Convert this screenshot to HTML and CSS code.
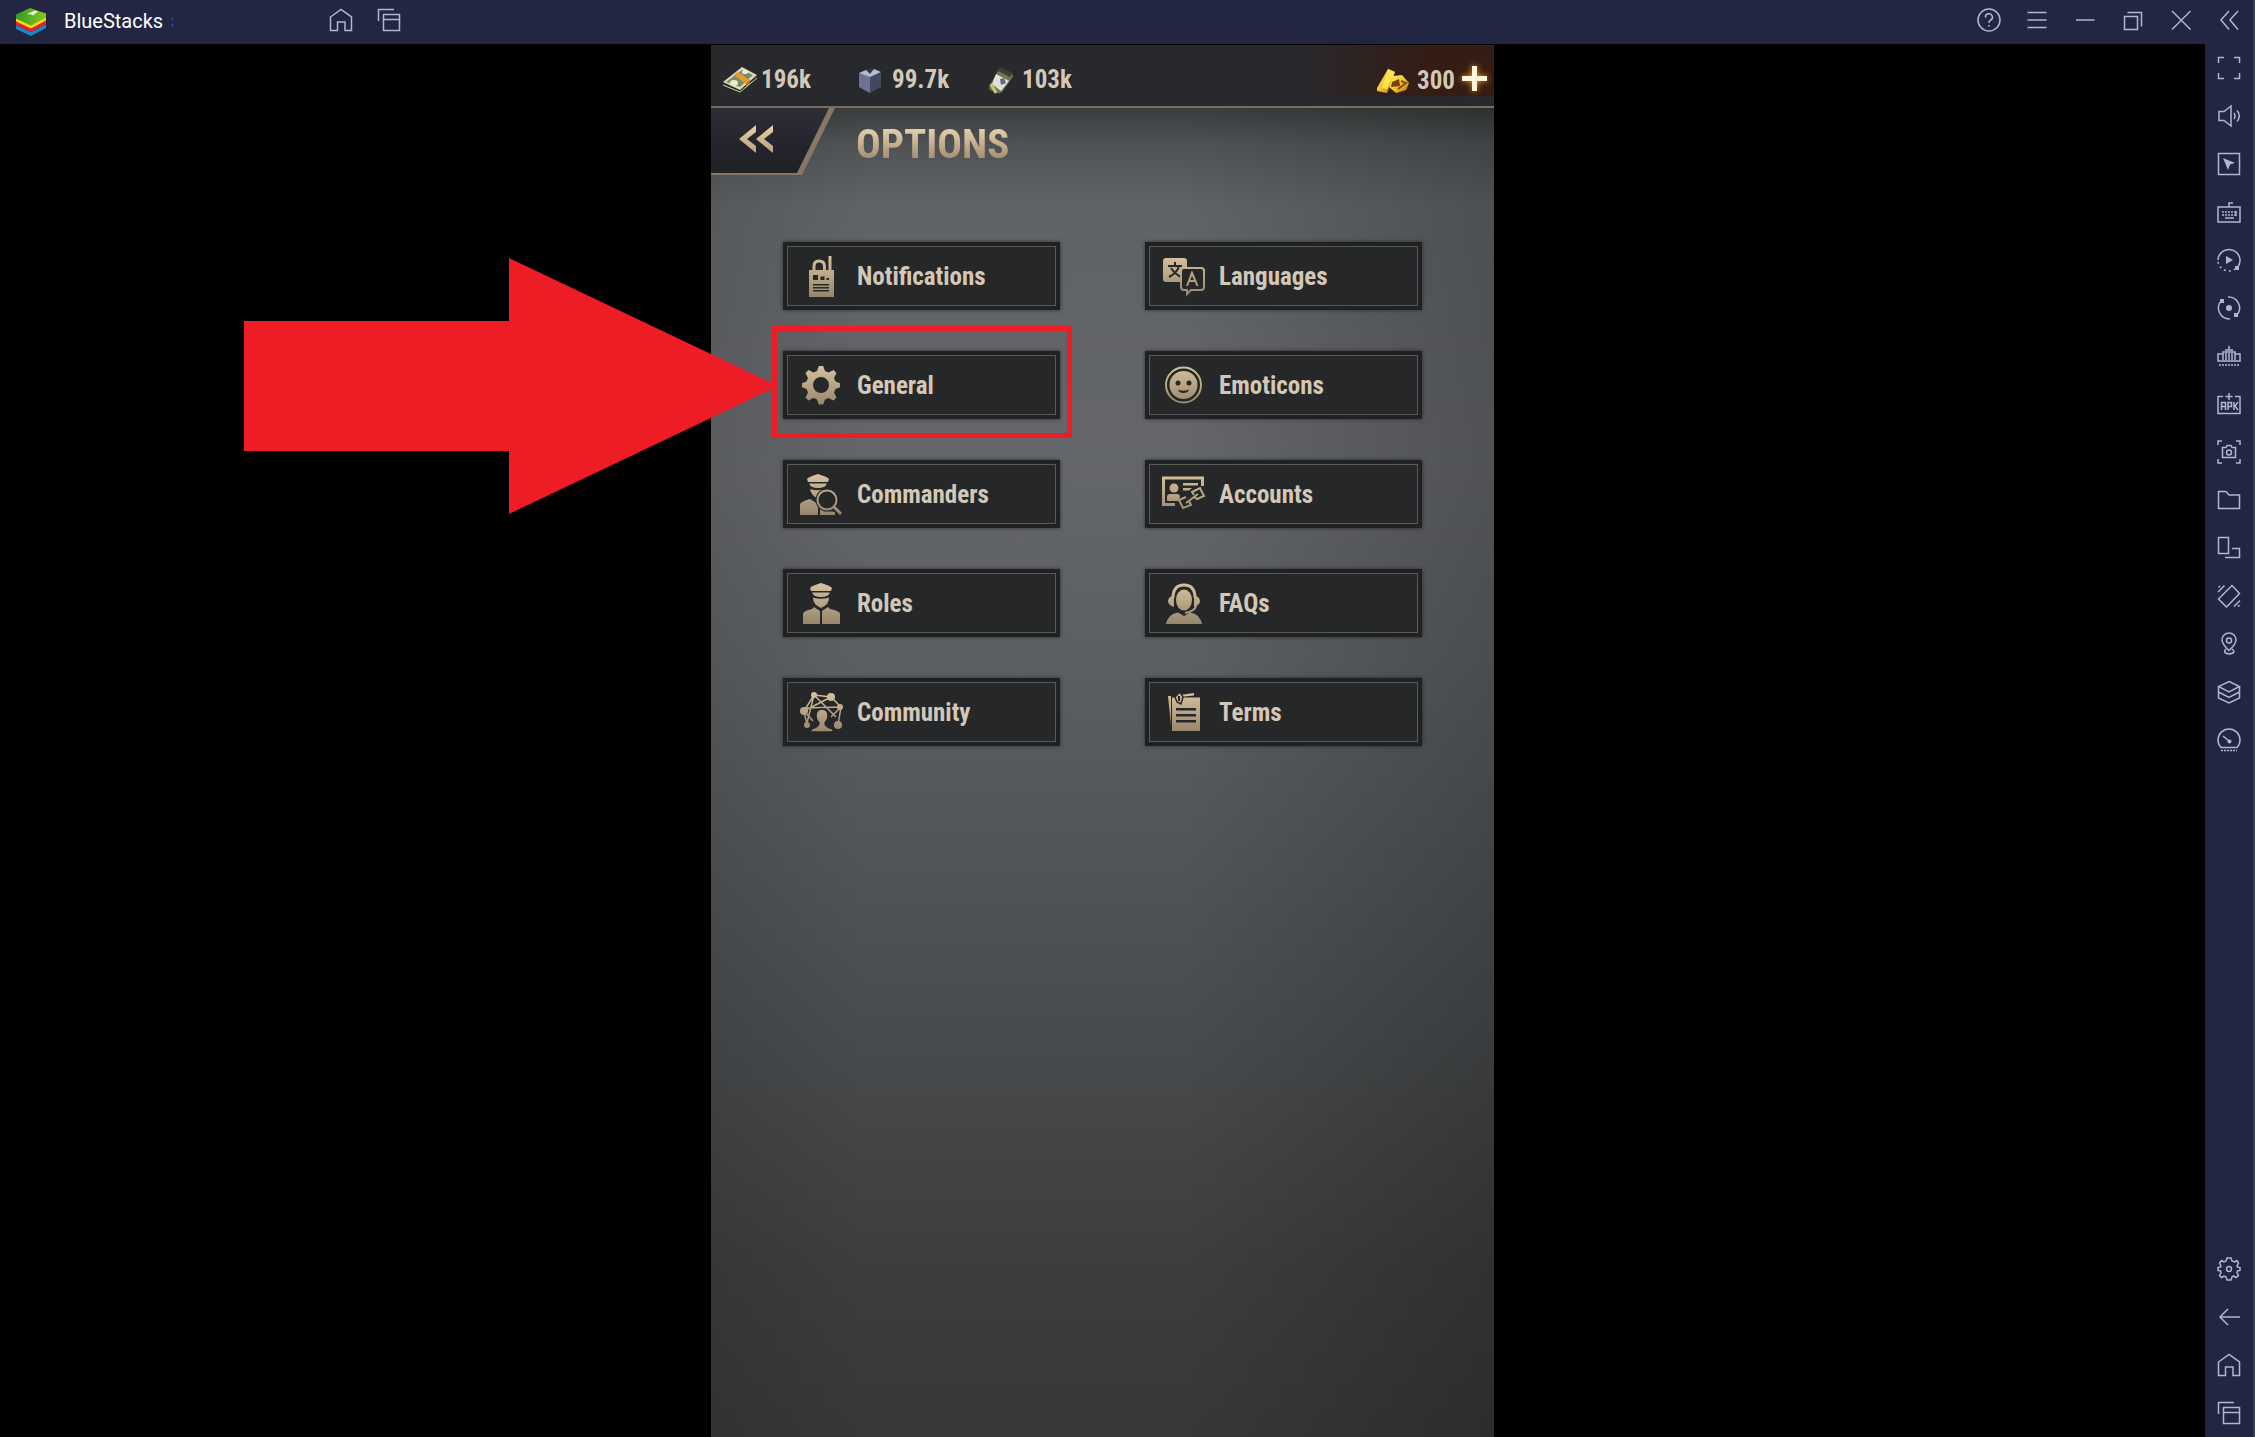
FILE: index.html
```html
<!DOCTYPE html>
<html lang="en">
<head>
<meta charset="utf-8">
<title>BlueStacks</title>
<link rel="stylesheet" href="styles.css">
</head>
<body>
<svg class="defs" width="0" height="0" aria-hidden="true">
  <defs>
    <linearGradient id="gold" gradientUnits="userSpaceOnUse" x1="0" y1="2" x2="0" y2="44">
      <stop offset="0" stop-color="#d8c49f"/><stop offset="1" stop-color="#96856b"/>
    </linearGradient>
    <linearGradient id="bar" x1="0" y1="0" x2="1" y2="1">
      <stop offset="0" stop-color="#fff27a"/><stop offset=".5" stop-color="#f2c62b"/><stop offset="1" stop-color="#b9780f"/>
    </linearGradient>
    <linearGradient id="leaf" x1="0" y1="0" x2="1" y2="0">
      <stop offset="0" stop-color="#2f9a2b"/><stop offset="1" stop-color="#8cc41c"/>
    </linearGradient>
    <symbol id="home" viewBox="0 0 24 24"><path d="M1.5 9 12 1.5 22.500 9V22.500H16V14H8.500V22.500H1.500Z"/></symbol>
    <symbol id="windows" viewBox="0 0 24 24"><path d="M6.500 6.500H22.500V22.500H6.500ZM6.500 11.500H22.500M1.500 13V1.500H17"/></symbol>
  </defs>
</svg>
<div class="app">
  <header class="titlebar">
    <svg class="logo" viewBox="0 0 32 30" aria-hidden="true">
      <path d="M1 18 16 25 31 17V21L16 29 1 22Z" fill="#1b86c4"/>
      <path d="M1 14 16 21 31 13V17L16 25 1 18Z" fill="#e3202b"/>
      <path d="M1 11 16 18 31 10V13.500L16 21.500 1 14.500Z" fill="#fbd316"/>
      <path d="M1 7.500 15 1 31 6.500V10.500L16 18.500 1 11.500Z" fill="url(#leaf)"/>
      <path d="M12 7 20 3.500 23 4.500 18 8.500 16 7.500Z" fill="#e8f5dc"/>
    </svg>
    <h1 class="app-name">BlueStacks</h1>
    <span class="tick" aria-hidden="true"></span>
    <nav class="tabs">
      <button class="tool" aria-label="Home"><svg><use href="#home"/></svg></button>
      <button class="tool" aria-label="Instances"><svg><use href="#windows"/></svg></button>
    </nav>
    <div class="window-tools">
      <button class="tool" aria-label="Help"><svg viewBox="0 0 24 24"><circle cx="12" cy="12" r="11"/><path d="M8.500 9.500A3.500 3.300 0 1 1 13.500 12Q12 12.800 12 15M12 17V18.500"/></svg></button>
      <button class="tool" aria-label="Menu"><svg viewBox="0 0 24 24"><path d="M2.500 4.500H21.500M2.500 12H21.500M2.500 19.500H21.500"/></svg></button>
      <button class="tool" aria-label="Minimize"><svg viewBox="0 0 24 24"><path d="M3 12H21.500"/></svg></button>
      <button class="tool" aria-label="Restore"><svg viewBox="0 0 24 24"><path d="M3.500 8.500H16.500V21.500H3.500ZM6.500 4.500H20.500V18.500"/></svg></button>
      <button class="tool" aria-label="Close"><svg viewBox="0 0 24 24"><path d="M3 3 21.500 21.500M21.500 3 3 21.500"/></svg></button>
      <button class="tool" aria-label="Collapse sidebar"><svg viewBox="0 0 24 24"><path d="M12 3 4 12 12 21.500M21 3 13 12 21 21.500"/></svg></button>
    </div>
  </header>
  <div class="workspace">
    <main class="stage">
      <section class="game">
        <div class="resources">
          <div class="resource cash">
            <svg class="res-icon" viewBox="0 0 35 29" aria-hidden="true"><path d="M0 17 19 1 34 10V15L18 28 0 21Z" fill="#2c3020"/><path d="M0 16 19 1 34 9 17 24Z" fill="#d8ddb8"/><path d="M3 16 19 4 30 9 17 21Z" fill="#7d8b64"/><ellipse cx="11" cy="17" rx="4" ry="3" fill="#e9edd2"/><ellipse cx="22" cy="6" rx="3" ry="2" fill="#e9edd2"/><path d="M11 9 15 6 27 14 23 18Z" fill="#e59a2c"/><path d="M23 18 27 14V18L23 22Z" fill="#a8671a"/><path d="M0 19 17 26 34 12" fill="none" stroke="#c7ccab"/></svg>
            <span>196k</span>
          </div>
          <div class="resource steel">
            <svg class="res-icon" viewBox="0 0 24 27" aria-hidden="true"><path d="M1 6 13 1 23 5V20L12 26 1 20Z" fill="#34364a"/><path d="M1 6 12 10V26L1 20Z" fill="#6c7390"/><path d="M12 10 23 5V20L12 26Z" fill="#45475e"/><path d="M1 6 8 3 12 7 16 2 23 5 12 10Z" fill="#b0bed4"/></svg>
            <span>99.7k</span>
          </div>
          <div class="resource food">
            <svg class="res-icon" viewBox="0 0 26 28" aria-hidden="true"><path d="M11 3 24 8Q26 10 24 12L14 26Q11 29 2 24 0 22 2 19Z" fill="#727550"/><path d="M8 8 21 15 13 25 4 18Z" fill="#dfe0da"/><path d="M12 13 16 12 18 17 13 19Z" fill="#656a75"/><path d="M12 1 25 7 22 11 10 5Z" fill="#3d4030"/><path d="M3 18 8 27" stroke="#c8c87c" stroke-width="3"/></svg>
            <span>103k</span>
          </div>
          <div class="resource premium">
            <svg class="res-icon" viewBox="0 0 34 26" aria-hidden="true"><path d="M1 20 12 1 19 4 11 25 1 23Z" fill="url(#bar)"/><path d="M12 1 19 4 11 21 6 20Z" fill="#ffe34d"/><path d="M17 8 26 7 33 15 30 22 20 25 13 19Z" fill="url(#bar)"/><path d="M16 14 23 11 24 18 15 19Z" fill="#7b4309"/><path d="M25 13 30 15 22 21" fill="none" stroke="#8a4d0a" stroke-width="2"/></svg>
            <span>300</span>
            <button class="plus" aria-label="Buy gold"></button>
          </div>
        </div>
        <header class="screen-head">
          <button class="back" aria-label="Back">
            <svg viewBox="0 0 125 68" aria-hidden="true"><defs><linearGradient id="dark" x1="0" y1="0" x2="0" y2="1"><stop offset="0" stop-color="#2d2e38"/><stop offset=".6" stop-color="#23232b"/><stop offset="1" stop-color="#212223"/></linearGradient><linearGradient id="chev" x1="0" y1="0" x2="0" y2="1"><stop offset="0" stop-color="#e4d0a7"/><stop offset="1" stop-color="#b8a17b"/></linearGradient></defs><path d="M0 0H119L88 67H0Z" fill="url(#dark)"/><path d="M118 0H124L91 67H85Z" fill="#887766"/><path d="M0 66H88" stroke="#887766" stroke-width="2"/><path d="M45 17V24L36 31 45 38V45L28 31ZM62 17V24L53 31 62 38V45L45 31Z" fill="url(#chev)"/></svg>
          </button>
          <h2>OPTIONS</h2>
        </header>
        <div class="options">
          <button class="option">
            <svg viewBox="0 0 46 46" aria-hidden="true"><path class="f" fill-rule="evenodd" d="M11 17H36V44H11ZM15 22V27H20V22ZM22.500 23.500V27H26.500V23.500ZM28.500 25V27H31V25ZM15 31V32.500H31V31ZM15 34V35.500H31V34ZM15 37V38.500H31V37Z"/><path class="s w3" d="M16 17V13Q16 8 21 8T26.500 13V17"/><path class="s w3" d="M32 3V17"/></svg>
            <span>Notifications</span></button>
          <button class="option">
            <svg viewBox="0 0 46 46" aria-hidden="true"><rect class="f" x="3" y="5" width="24" height="24" rx="3"/><path class="d" d="M15 9V12M8 13H22M19 13Q17 20 9 24M11 15Q15 21 21 24"/><path class="s w2 k" d="M24 15H41Q44 15 44 18V34Q44 37 41 37H31L27 41V37H24Q21 37 21 34V18Q21 15 24 15Z"/><path class="s w2" d="M27 33 32 20 37.500 33M29 28H36"/></svg>
            <span>Languages</span></button>
          <div class="marked">
            <button class="option">
              <svg viewBox="0 0 46 46" aria-hidden="true"><path class="f" fill-rule="evenodd" d="M20.800 4H25.200L27 9 30.500 10.500 35.500 8 38.500 11 36 16 37.500 19.500 42 21.200V25.200L37.500 27 36 30.500 38.500 35.500 35.500 38.500 30.500 36 27 37.500 25.200 42.500H20.800L19 37.500 15.500 36 10.500 38.500 7.500 35.500 10 30.500 8.500 27 4 25.200V21.200L8.500 19.500 10 16 7.500 11 10.500 8 15.500 10.500 19 9ZM23 15A8 8 0 1 0 23 31 8 8 0 1 0 23 15Z"/></svg>
              <span>General</span></button>
            <span class="frame"></span>
            <svg class="arrow" viewBox="0 0 534 256" aria-hidden="true"><path d="M0 63H265V0L534 128 265 256V193H0Z"/></svg>
          </div>
          <button class="option">
            <svg viewBox="0 0 46 46" aria-hidden="true"><circle class="s w2" cx="23.500" cy="23" r="17.500"/><path class="f" fill-rule="evenodd" d="M23.500 9A14 14 0 1 0 23.500 37 14 14 0 1 0 23.500 9ZM18 18.500A2.500 2.500 0 1 1 18 23.500 2.500 2.500 0 1 1 18 18.500ZM29 18.500A2.500 2.500 0 1 1 29 23.500 2.500 2.500 0 1 1 29 18.500ZM18 27.500Q23.500 30 29 27.500 28 31 23.500 31T18 27.500Z"/></svg>
            <span>Emoticons</span></button>
          <button class="option">
            <svg viewBox="0 0 46 46" aria-hidden="true"><path class="f" d="M9 8Q10 6 20 3 30 6 31 8L30 11H10ZM11 12.500H29L27 15.500Q20 18.500 13 15.500ZM12 18Q20 20.500 27 18L20 28Q13 24 12 18ZM2 44V33Q4 30 12 28L20 33V44ZM22 44V36L30 40 37 41V44Z"/><circle cx="29" cy="29" r="11.500" fill="#262728"/><circle class="s w2" cx="29" cy="29" r="9.500"/><path class="s w3" d="M36 36 43 43"/></svg>
            <span>Commanders</span></button>
          <button class="option">
            <svg viewBox="0 0 46 46" aria-hidden="true"><path class="s w3" d="M15 33.500H3.500V7H42.500V15"/><circle class="f" cx="14" cy="17" r="4.500"/><path class="f" d="M7 30V26Q7 23 10 23H17Q20 23 20 26L18 30ZM23 12H38V14.500H23ZM23 17H32L29 19.500H23Z"/><path class="s w2" d="M26 26 19 29 23 37 31 34 29 30M34 24 32 21 40 17 44 25 37 28 34 26M26 32 38 23"/></svg>
            <span>Accounts</span></button>
          <button class="option">
            <svg viewBox="0 0 46 46" aria-hidden="true"><path class="f" d="M12 8Q13 6 23 3 33 6 34 8L33 11H13ZM14 12.500H32L30 15.500Q23 18.500 16 15.500ZM15 17.500Q23 20 31 17.500 31 25 23 28 15 25 15 17.500ZM5 44V34Q5 31 14 29L16 27 22 31V44ZM24 44V31L30 27 32 29Q42 31 42 34V44Z"/></svg>
            <span>Roles</span></button>
          <button class="option">
            <svg viewBox="0 0 46 46" aria-hidden="true"><ellipse class="f" cx="24" cy="20" rx="8" ry="10.500"/><path class="s w3" d="M13 18Q13 5 24 5T35 18"/><path class="s w2" d="M36 26Q35 31 25 33"/><path class="f" d="M14 15Q8 17 8 21T14 27ZM34 15Q40 17 40 21T34 27ZM6 44Q8 34 18 32.500L24 36 30 32.500Q40 34 42 44Z"/></svg>
            <span>FAQs</span></button>
          <button class="option">
            <svg viewBox="0 0 46 46" aria-hidden="true"><path class="s w1" d="M6 22 16 6 33 8 43 18 40 36M6 22 9 36M6 22 33 8M6 19 43 18M16 6 38 28M16 6 9 34M6 22 15 32M43 18 33 28"/><circle class="f" cx="6" cy="22" r="4"/><circle class="f" cx="16" cy="6" r="3"/><circle class="f" cx="33" cy="8" r="4"/><circle class="f" cx="42" cy="18" r="3"/><circle class="f" cx="40" cy="36" r="4"/><circle class="f" cx="9" cy="36" r="3"/><path class="f o" d="M24 20Q30 20 30 27 30 31 27 34 27 38 35 40V43H13V40Q21 38 21 34 18 31 18 27 18 20 24 20Z"/></svg>
            <span>Community</span></button>
          <button class="option">
            <svg viewBox="0 0 46 46" aria-hidden="true"><path class="f" d="M8 7H11V36ZM20 6 34 4V6.500L20 8Z"/><path class="f" fill-rule="evenodd" d="M12 8.500H40V42H12ZM16 19V21.500H36V19ZM16 25V27.500H36V25ZM16 31V33.500H36V31Z"/><path class="f o" d="M15 8 20 3 23 8 21 15 17 13Z"/><path class="d" d="M19 7V12"/></svg>
            <span>Terms</span></button>
        </div>
      </section>
    </main>
    <aside class="sidebar">
      <div class="group">
        <button class="tool" aria-label="Full screen"><svg viewBox="0 0 24 24"><path d="M1.500 7V1.500H7M17 1.500H22.500V7M22.500 17V22.500H17M7 22.500H1.500V17"/></svg></button>
        <button class="tool" aria-label="Volume"><svg viewBox="0 0 24 24"><path d="M2 7.500H7L14 2V22L7 16.500H2ZM17 9Q19 12 17 15M20 6.500Q24.500 12 20 17.500"/></svg></button>
        <button class="tool" aria-label="Lock cursor"><svg viewBox="0 0 24 24"><path d="M1.500 1.500H22.500V22.500H1.500Z"/><path class="p" d="M6 6 18 11 13 12.500 11 18Z"/></svg></button>
        <button class="tool" aria-label="Game controls"><svg viewBox="0 0 24 24"><path d="M1 7H23V22H1ZM12 7V3H16"/><path d="M5 12H19M5 15H19" stroke-dasharray="2 1"/><path d="M8 18H17M19 11V16"/></svg></button>
        <button class="tool" aria-label="Macro"><svg viewBox="0 0 24 24"><path d="M1 12A11 11 0 1 1 20 20"/><path d="M1 14A11 11 0 0 0 18 21" stroke-dasharray="2 3"/><path class="p" d="M9 8 16 12 9 16ZM18 18H22V22H18Z"/></svg></button>
        <button class="tool" aria-label="Sync"><svg viewBox="0 0 24 24"><path d="M11 1A11 11 0 0 1 20 19M13 23A11 11 0 0 1 4 5"/><circle class="p" cx="12" cy="12" r="3"/><path class="p" d="M3 3H7V7H3ZM17 17H21V21H17Z"/></svg></button>
        <button class="tool" aria-label="Memory trim"><svg viewBox="0 0 24 24"><path d="M6 10H1V17H23V10H18M6 16V8H18V16M9 9V16M12 9V16M15 9V16M8 6H16M12 2V6"/><path d="M2 21H22" stroke-dasharray="2 1"/></svg></button>
        <button class="tool" aria-label="Install APK"><svg viewBox="0 0 24 24"><path d="M6 4.500H1V21.500H23V4.500H18M12 1V8M8.500 4.500H15.500M4.500 18V10.500H8.500V18M4.500 14.500H8.500M11 18V10.500H14.500V14.500H11M17 10V18M21 10 18 14 21 18"/></svg></button>
        <button class="tool" aria-label="Screenshot"><svg viewBox="0 0 24 24"><path d="M1 5V1H5M19 1H23V5M23 19V23H19M5 23H1V19M5.500 7.500H9L10 5.500H14L15 7.500H18.500V17.500H5.500Z"/><circle cx="12" cy="12.500" r="2.500"/></svg></button>
        <button class="tool" aria-label="Media folder"><svg viewBox="0 0 24 24"><path d="M1.500 3.500H9L12 7H22.500V20.500H1.500Z"/></svg></button>
        <button class="tool" aria-label="Rotate"><svg viewBox="0 0 24 24"><path d="M1.500 1.500H11.500V17.500H1.500ZM15 12.500H22.500V21.500H8"/></svg></button>
        <button class="tool" aria-label="Shake"><svg viewBox="0 0 24 24"><path d="M1.500 15 15 1.500 22.500 9.500 9.500 23ZM1 8 7.500 1.500M17 22.500 23 16.500M1.500 3.500 3 2M21 22.500 22.500 21"/></svg></button>
        <button class="tool" aria-label="Location"><svg viewBox="0 0 24 24"><path d="M12 18.500Q5 12 5 8A7 7 0 0 1 19 8Q19 12 12 18.500ZM9 17Q5 21 12 22 20 21 15 17"/><circle cx="12" cy="8.500" r="2.500"/></svg></button>
        <button class="tool" aria-label="Layers"><svg viewBox="0 0 24 24"><path d="M12 1.500 22.500 6.500 12 12 1.500 6.500ZM1.500 6.500V18L12 23 22.500 18V6.500M1.500 12 12 17.500 22.500 12"/></svg></button>
        <button class="tool" aria-label="Performance"><svg viewBox="0 0 24 24"><path d="M4 19.500A11 11 0 1 1 20 19.500ZM6 8 12 13"/><path d="M4 22.500H20" stroke-dasharray="2 1"/><circle class="p" cx="12.500" cy="13.500" r="2"/></svg></button>
      </div>
      <div class="group">
        <button class="tool" aria-label="Settings"><svg viewBox="0 0 24 24"><path d="M10 1H14L15 4 17.500 5 20 3.500 21.500 6 20 9 20.500 10 23 10.500V13.500L20.500 14 20 15.500 21.500 18.500 19 20.500 16.500 19 15 20 14 23H10L9 20 7 19 4.500 20.500 2.500 18.500 4 15.500 3.500 14 1 13.500V10.500L3.500 10 4 9 2.500 6 4.500 3.500 7 5 9 4Z"/><circle cx="12" cy="12" r="2.500"/></svg></button>
        <button class="tool" aria-label="Back"><svg viewBox="0 0 24 24"><path d="M23 12H3M11 4 3 12 11 20"/></svg></button>
        <button class="tool" aria-label="Android home"><svg><use href="#home"/></svg></button>
        <button class="tool" aria-label="Recent apps"><svg><use href="#windows"/></svg></button>
      </div>
    </aside>
  </div>
</div>
</body>
</html>
```
FILE: styles.css
```css
* { box-sizing: border-box; }

body {
  margin: 0;
  background: #000;
  font-family: Roboto, "Liberation Sans", sans-serif;
}

button {
  margin: 0;
  padding: 0;
  border: 0;
  background: none;
  color: inherit;
  font: inherit;
}

.defs { position: absolute; }

.app {
  display: flex;
  flex-direction: column;
  min-height: 100vh;
  border-right: 2px solid #3a3d61;
}

/* Emulator chrome */
.titlebar {
  display: flex;
  align-items: center;
  height: 44px;
  padding-left: 15px;
  background: #232642;
  color: #fff;
}

.logo { width: 32px; height: 30px; }

.app-name {
  margin: 0 0 2px 17px;
  width: 108px;
  font-size: 20px;
  line-height: 24px;
  font-weight: 400;
}

.tick {
  width: 1px;
  height: 8px;
  border: solid #3567b8;
  border-width: 2px 0;
}

.tabs { display: flex; margin-left: 144px; }
.window-tools { display: flex; margin-left: auto; }

.tool {
  display: grid;
  place-items: center;
  width: 48px;
  height: 48px;
}

.titlebar .tool { height: 40px; }
.titlebar .tabs, .titlebar .window-tools { height: 44px; }

.tool svg {
  width: 24px;
  height: 24px;
  fill: none;
  stroke: #b3b5cd;
  stroke-width: 1.5;
}

.tool .p { fill: #b3b5cd; stroke: none; }

.workspace { display: flex; flex: 1; }

.stage {
  display: flex;
  flex: 1;
  justify-content: center;
  padding-top: 1px;
}

.sidebar {
  display: flex;
  flex-direction: column;
  justify-content: space-between;
  width: 48px;
  background: #232642;
}

/* Game screen */
.game {
  display: flex;
  flex-direction: column;
  aspect-ratio: 9 / 16;
  min-height: calc(100vh - 45px);
  background:
    linear-gradient(90deg, #0000001a, #0000 20%, #0000 60%, #0003),
    linear-gradient(180deg, #393b3c 62px, #505356 100px, #606366 160px, #64666a 420px, #5c5f62 620px, #4f5255 860px, #454749 1050px, #3c3d3e 1220px, #363737);
  color: #d3c8b7;
  font-family: "Roboto Condensed", Roboto, sans-serif;
  font-weight: 700;
}

.resources {
  display: flex;
  height: 63px;
  border-bottom: 2px solid #796b5d;
  background: #28292d;
  font-size: 25px;
  line-height: 30px;
}

.resource {
  display: flex;
  align-items: center;
  height: 50px;
  margin-top: 10px;
}

.cash { gap: 3px; padding-left: 12px; width: 147px; }
.steel { gap: 10px; width: 130px; }
.food { gap: 8px; }

.cash .res-icon { width: 35px; height: 29px; }
.steel .res-icon { width: 24px; height: 27px; }
.food .res-icon { width: 26px; height: 28px; }
.premium .res-icon { width: 34px; height: 26px; }

.premium {
  gap: 7px;
  justify-content: flex-end;
  width: 200px;
  margin: 1px 0 0 auto;
  padding: 20px 7px 0 0;
  background: linear-gradient(90deg, #351c1400, #351c14 70%);
}

.plus {
  width: 25px;
  height: 25px;
  margin-bottom: 6px;
  background:
    linear-gradient(#fff6dc, #fff6dc) center / 5px 100% no-repeat,
    linear-gradient(#fff6dc, #fff6dc) center / 100% 5px no-repeat;
  filter: drop-shadow(0 0 3px #f09a1c);
}

.screen-head { display: flex; height: 67px; }

.back { width: 125px; height: 68px; }
.back svg { display: block; width: 125px; height: 68px; }

.screen-head h2 {
  margin: 12px 0 0 20px;
  height: 48px;
  font-size: 41px;
  line-height: 48px;
  background: linear-gradient(#e2cdab 20%, #a18a6c 85%);
  background-clip: text;
  color: transparent;
}

.options {
  display: grid;
  grid-template-columns: 1fr 1fr;
  gap: 41px 85px;
  padding: 67px 72px;
}

.option {
  display: flex;
  align-items: center;
  gap: 13px;
  width: 100%;
  height: 68px;
  padding: 0 0 0 11px;
  border: 4px solid #202122;
  outline: 1px solid #585959;
  outline-offset: -5px;
  background: #262728;
  box-shadow: 0 0 4px #0008;
  font-size: 25px;
  line-height: 32px;
}

.option span { padding-top: 2px; }
.option svg { width: 46px; height: 46px; }
.f { fill: url(#gold); }
.s { fill: none; stroke: url(#gold); }
.k { fill: #262728; }
.d { fill: none; stroke: #262728; stroke-width: 2; }
.w1 { stroke-width: 1.5; }
.w2 { stroke-width: 2; }
.w3 { stroke-width: 3; }
.o { stroke: #262728; stroke-width: 1.5; }

/* Tutorial callout drawn over the General entry */
.marked { position: relative; }

.frame {
  position: absolute;
  inset: -25px -12px -19px -11px;
  border: 5px solid #ee1c25;
}

.arrow {
  position: absolute;
  top: -93px;
  right: calc(100% + 5px);
  width: 534px;
  height: 256px;
  fill: #ee1c25;
}
```
